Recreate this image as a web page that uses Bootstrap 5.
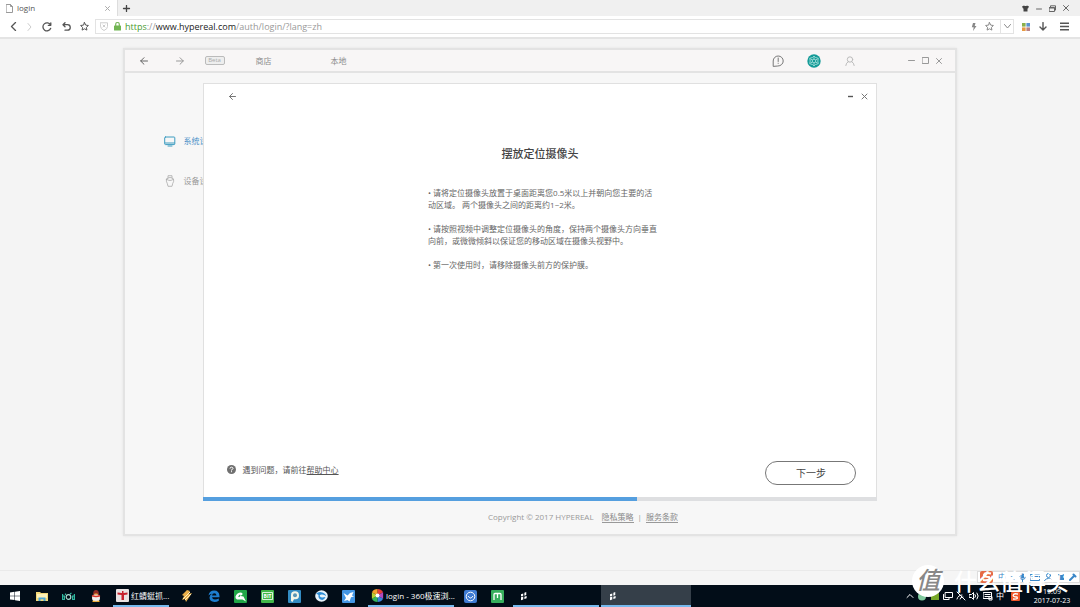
<!DOCTYPE html>
<html lang="zh-CN">
<head>
<meta charset="utf-8">
<meta name="viewport" content="width=device-width, initial-scale=1">
<title>login</title>
<link href="https://cdn.jsdelivr.net/npm/bootstrap@5.3.0/dist/css/bootstrap.min.css" rel="stylesheet">
<style>
body{font-family:"Open Sans","Noto Sans CJK SC",sans-serif;font-size:8px;line-height:12px;color:#666;background:#f4f4f4}
svg{display:block;flex:none}
.ln{fill:none;stroke:currentColor;stroke-linecap:round;stroke-linejoin:round}
.ib{background:none;border:0;padding:0;color:inherit;display:flex;align-items:center;justify-content:center;flex:none}
.tabstrip{height:16px;background:#f0f0f0}
.tab{width:118px;background:#fff;border-right:1px solid #ddd;padding:0 7px 0 6px;color:#555}
.winbtns{gap:7px;padding-right:11px}
.addr{height:23px;background:#fff;border-bottom:2px solid #e4e4e4;color:#555;padding:0 11px 0 7px}
.addr .nb{width:18px}
.urlbox{height:15px;border:1px solid #e3e3e3;margin-left:2px;padding-left:4px}
.urltext{font-size:9px;color:#999;margin-left:4px}
.urltext b{font-weight:500;color:#222}
.urltext i{font-style:normal;color:#4a9c2f}
.drop{width:13px;border-left:1px solid #e3e3e3;color:#888}
.stage{padding:9px 0 0}
.appwin{width:77.3%;height:488px;background:#f7f7f7;border:2px solid #e3e3e3;box-shadow:0 0 2px #e4e4e4}
.apphead{height:23px;background:#f8f6f6;border-bottom:2px solid #e3e3e3;padding:0 13px 0 13px;color:#999}
.apphead a{color:#8c8c8c;text-decoration:none}
.beta{width:20px;height:9px;border:1px solid #bbb;border-radius:2px;background:#eee;color:#aaa;font-size:6px;line-height:7px;text-align:center;margin-left:19px}
.side{width:78px;padding:59px 0 0 39px;overflow:hidden;flex:none;white-space:nowrap}
.side a{display:flex;align-items:center;height:18px;gap:8px;margin-bottom:22px;color:#999;text-decoration:none}
.side a.on{color:#4a90c8}
.dialog-box{margin:10px 78px 0 0;height:418px;background:#fff;border:1px solid #e0e0e0;border-bottom:0}
.dhead{height:24px;padding:0 8px 0 22px;color:#777}
.dtitle{font-size:11px;line-height:16px;font-weight:500;color:#444;text-align:center;margin:38px 0 25px;}
.dtext{width:224px;margin:0 auto;white-space:nowrap}
.dtext p{margin-bottom:12px;line-height:12px}
.dfoot{padding:0 20px 12px 23px}
.help{color:#555;gap:7px;margin-bottom:7px}
.help a{color:#555}
.nextbtn{width:91px;height:24px;border:1px solid #777;border-radius:12px;background:#fff;color:#444;font-size:10px;line-height:20px;padding:0}
.steps{height:4px;border-radius:0;background:#dedfe1;margin:0 -1px}
.steps .progress-bar{background:#559fdf}
.foot{color:#999;padding:10px 0 0 86px}
.foot a{color:#888;text-decoration:none;border-bottom:1px solid #999;line-height:11px}
.statusline{height:15px;border-top:1px solid #eaeaea;background:#f5f5f5}
.taskbar{height:22px;background:#020d18;color:#fff;padding-left:1px}
.taskbar .slot{width:27px}
.task{border-bottom:2px solid #76b9ed;padding:1px 3px 0;justify-content:start;gap:2px;white-space:nowrap}
.task.cur{background:#353f49}
.w-s{width:56px}.w-l{width:86px}.w-xl{width:90px}
.clock{width:56px;font-size:7px;line-height:9px;text-align:center;align-self:center}
.tray{gap:3px;font-size:8px}
.stamp{position:absolute;right:11px;bottom:10px;color:#fff;display:flex;align-items:center;gap:10px;font-size:23px;line-height:32px;font-weight:500;pointer-events:none}
.stamp .disc{width:32px;height:32px;border-radius:50%;background:#fff;color:#888;font-size:24px;font-style:italic;line-height:30px;text-align:center}
.ime{position:absolute;right:0;bottom:24px;height:12px;background:#fff;border:1px solid #ddd;color:#3a87c8;display:flex;gap:4px;align-items:center;padding:0 2px}
</style>
</head>
<body>
<div class="d-flex flex-column vh-100 overflow-hidden position-relative">

<div class="tabstrip d-flex align-items-stretch">
  <div class="tab d-flex align-items-center">
    <svg width="7" height="9" viewBox="0 0 7 9" class="ln" style="color:#999"><path d="M.5.5h4l2 2v6h-6zM4.500.5v2h2"/></svg>
    <span class="ms-1 me-auto">login</span>
    <button class="ib" aria-label="关闭标签"><svg width="5" height="5" viewBox="0 0 5 5" class="ln"><path stroke="#aaa" d="M.5.5l4 4m0-4l-4 4"/></svg></button>
  </div>
  <button class="ib px-1" aria-label="新标签"><svg width="9" height="7" viewBox="0 0 9 7" class="ln"><path stroke="#444" stroke-width="1.300" d="M4.500.5v6m-3-3h6"/></svg></button>
  <div class="winbtns ms-auto d-flex align-items-center">
    <svg width="7" height="7" viewBox="0 0 7 7"><path fill="#444" d="M2 .4q1.500 1 3 0L7 1.500 6 3.400H5.500V6.500h-4V3.400H1L0 1.500z"/></svg>
    <button class="ib" aria-label="最小化"><svg width="6" height="7" class="ln"><path d="M.5 4h5"/></svg></button>
    <button class="ib" aria-label="还原"><svg width="7" height="7" class="ln"><path d="M1.500 2V.8h5V5M.5 2.500h5v4h-5zM.5 3h5"/></svg></button>
    <button class="ib" aria-label="关闭"><svg width="6" height="6" class="ln"><path d="M.5.5l5 5m0-5l-5 5"/></svg></button>
  </div>
</div>

<div class="addr d-flex align-items-center">
  <button class="ib" style="width:13px" aria-label="后退"><svg width="7" height="9" viewBox="0 0 7 9" class="ln"><path stroke-width="1.300" d="M5.500.5l-4 4 4 4"/></svg></button>
  <button class="ib nb" aria-label="前进"><svg width="5" height="8" viewBox="0 0 5 8" class="ln"><path stroke="#ccc" d="M1 .5L4 4 1 7.500"/></svg></button>
  <button class="ib nb" aria-label="刷新"><svg width="10" height="10" viewBox="0 0 10 10" class="ln"><path stroke-width="1.300" d="M8.700 6.300A4 4 0 1 1 8.500 3M8.800.8v2.500H6.300"/></svg></button>
  <button class="ib nb" style="margin-left:1px" aria-label="恢复"><svg width="9" height="9" viewBox="0 0 9 9" class="ln"><path stroke-width="1.300" d="M3 .7L1 2.700l2 2M1 2.700h4.500a2.700 2.700 0 0 1 0 5.500H3"/></svg></button>
  <button class="ib nb" aria-label="收藏"><svg width="9" height="9" viewBox="0 0 9 9" class="ln"><path d="M4.500.6l1.200 2.500 2.700.4-2 1.900.5 2.700-2.400-1.300-2.400 1.300.5-2.700-2-1.900 2.700-.4z"/></svg></button>
  <div class="urlbox d-flex align-items-center flex-grow-1">
    <svg width="8" height="9" viewBox="0 0 8 9" class="ln"><path stroke="#ccc" d="M.5.8h7v3.700q0 2.600-3.500 4-3.500-1.400-3.500-4zM3 3l2 2m0-2l-2 2"/></svg>
    <svg style="margin-left:6px" width="7" height="9" viewBox="0 0 7 9"><path fill="none" stroke="#7cb85f" stroke-width="1.200" d="M1.700 4V2.300a1.800 1.800 0 0 1 3.600 0V4"/><rect y="3.500" width="7" height="5" rx=".6" fill="#71b552"/></svg>
    <span class="urltext"><i>https</i>://<b>www.hypereal.com</b>/auth/login/?lang=zh</span>
    <div class="ms-auto d-flex align-items-center gap-2 h-100">
      <svg width="6" height="8" viewBox="0 0 6 8"><path fill="#888" d="M2 0h2.500L3.700 3H5.500L2 8l.7-3.800H.8z"/></svg>
      <svg width="9" height="9" viewBox="0 0 9 9" class="ln"><path stroke="#888" d="M4.500.6l1.200 2.500 2.700.4-2 1.900.5 2.700-2.400-1.300-2.400 1.300.5-2.700-2-1.900 2.700-.4z"/></svg>
      <button class="ib drop h-100" style="margin-left:-2px" aria-label="展开"><svg width="7" height="5" class="ln"><path d="M.5.5l3 3.500 3-3.500"/></svg></button>
    </div>
  </div>
  <svg class="ms-2" width="8" height="8" viewBox="0 0 8 8"><path fill="#8ab04b" d="M0 0h3.600v3.600H0z"/><path fill="#5b93cf" d="M4.400 0H8v3.600H4.400z"/><path fill="#e79a43" d="M0 4.400h3.600V8H0z"/><path fill="#b98284" d="M4.400 4.400H8V8H4.400z"/></svg>
  <button class="ib px-2" aria-label="下载"><svg width="10" height="9" viewBox="0 0 10 9" class="ln"><path stroke-width="1.400" d="M5 .6v7M2 5l3 3 3-3"/></svg></button>
  <button class="ib ps-1" aria-label="菜单"><svg width="9" height="9" viewBox="0 0 9 9"><path stroke="#555" stroke-width="1.400" d="M0 1.200h9M0 4.500h9M0 7.800h9"/></svg></button>
</div>

<main class="stage flex-grow-1">
  <div class="appwin mx-auto d-flex flex-column">
    <header class="apphead d-flex align-items-center flex-shrink-0">
      <button class="ib" style="width:12px" aria-label="返回"><svg width="8" height="8" viewBox="0 0 8 8" class="ln"><path stroke="#666" d="M7.500 4H.7M4 .7L.7 4 4 7.300"/></svg></button>
      <button class="ib" style="width:12px;margin-left:24px" aria-label="前进"><svg width="8" height="8" viewBox="0 0 8 8" class="ln"><path d="M.5 4h6.800M4 .7L7.300 4 4 7.300"/></svg></button>
      <span class="beta">Beta</span>
      <a href="#" style="margin-left:31px">商店</a>
      <a href="#" style="margin-left:59px">本地</a>
      <div class="ms-auto d-flex align-items-center">
        <button class="ib" aria-label="反馈"><svg width="12" height="12" viewBox="0 0 12 12" class="ln"><path stroke="#777" d="M1.200 11V6a5 5 0 1 1 5 5zM6.200 3v3.500m0 1.700v.2"/></svg></button>
        <button class="ib" style="margin:0 24px 0 23px" aria-label="设置"><svg width="14" height="14" viewBox="0 0 14 14"><circle cx="7" cy="7" r="6.700" fill="#159b98"/><g fill="none" stroke="#b1e4df" stroke-width=".8"><path d="M7 2l1.500 1.500 2.800.8-.5 2.700.5 2.700-2.800.8L7 12l-1.500-1.500-2.800-.8.5-2.700-.5-2.700 2.800-.8z"/><circle cx="7" cy="7" r="1.800"/><path d="M7 3v2.200M7 8.800V11M3.500 5l2 1m3 2l2 1m-7 0l2-1m3-2l2-1"/></g></svg></button>
        <button class="ib" aria-label="用户"><svg width="10" height="10" viewBox="0 0 10 10" class="ln"><circle cx="5" cy="3.500" r="2.700" stroke="#bbb"/><path stroke="#bbb" d="M.8 9.500Q1 6.800 3.200 5.700m3.600 0Q9 6.800 9.200 9.500"/></svg></button>
        <button class="ib" style="margin-left:53px" aria-label="最小化"><svg width="7" height="7" class="ln"><path d="M.5 3.500h6"/></svg></button>
        <button class="ib" style="margin:0 7px" aria-label="最大化"><svg width="7" height="7" class="ln"><path d="M.5.5h6v6h-6z"/></svg></button>
        <button class="ib" aria-label="关闭"><svg width="6" height="6" class="ln"><path d="M.5.5l5 5m0-5l-5 5"/></svg></button>
      </div>
    </header>
    <div class="d-flex">
      <nav class="side">
        <a class="on" href="#"><svg width="12" height="11" viewBox="0 0 12 11" class="ln"><path stroke="#3c9cc0" d="M1.500 1h8.500q.8 0 .8.8v6q0 .8-.8.8H1.500q-.8 0-.8-.8v-6Q.7 1 1.500 1zM1 7h9.500M4 10h4"/></svg>系统设置</a>
        <a href="#"><svg width="12" height="12" viewBox="0 0 12 12" class="ln"><path stroke="#aaa" stroke-width=".8" d="M4 3V.7h4V3M2.500 4.200Q4 2.500 6 2.500t3.500 1.700q.8 2-.8 4.300l-.7 2.800H4l-.7-2.800Q1.700 6.200 2.500 4.200zM2.500 4.200Q6 7 9.500 4.200"/></svg>设备设置</a>
      </nav>
      <section class="dialog-box flex-grow-1 d-flex flex-column">
        <div class="dhead d-flex align-items-center">
          <button class="ib" style="width:13px" aria-label="上一步"><svg width="7" height="7" viewBox="0 0 7 7" class="ln"><path d="M6.500 3.500h-6M3.500.5l-3 3 3 3"/></svg></button>
          <button class="ib ms-auto me-2" aria-label="最小化"><svg width="5" height="6"><path stroke="#555" stroke-width="1.400" d="M0 3.500h5"/></svg></button>
          <button class="ib" aria-label="关闭"><svg width="7" height="7" viewBox="0 0 7 7" class="ln"><path d="M1 1l5 5m0-5L1 6"/></svg></button>
        </div>
        <h1 class="dtitle">摆放定位摄像头</h1>
        <div class="dtext">
          <p>• 请将定位摄像头放置于桌面距离您0.5米以上并朝向您主要的活<br>动区域。 两个摄像头之间的距离约1~2米。</p>
          <p>• 请按照视频中调整定位摄像头的角度，保持两个摄像头方向垂直<br>向前，或微微倾斜以保证您的移动区域在摄像头视野中。</p>
          <p>• 第一次使用时，请移除摄像头前方的保护膜。</p>
        </div>
        <div class="dfoot d-flex align-items-center justify-content-between mt-auto">
          <div class="help d-flex align-items-center"><svg width="9" height="9" viewBox="0 0 9 9"><circle cx="4.500" cy="4.500" r="4.500" fill="#707070"/><path fill="none" stroke="#fff" d="M3 3.600Q3 2.200 4.500 2.200T6 3.500Q6 4.300 4.500 4.800v.7m0 .7v1"/></svg><span>遇到问题，请前往<a href="#">帮助中心</a></span></div>
          <button class="nextbtn">下一步</button>
        </div>
        <div class="progress steps" role="progressbar" aria-label="设置进度" aria-valuenow="64" aria-valuemin="0" aria-valuemax="100"><div class="progress-bar" style="width:64.400%"></div></div>
      </section>
    </div>
    <footer class="foot d-flex justify-content-center">
      <span class="me-2">Copyright © 2017 HYPEREAL</span><a href="#">隐私策略</a><span class="mx-1">|</span><a href="#">服务条款</a>
    </footer>
  </div>
</main>

<div class="statusline flex-shrink-0"></div>
<div class="taskbar d-flex align-items-stretch flex-shrink-0">
  <button class="ib slot" aria-label="开始"><svg width="10" height="10" viewBox="0 0 10 10"><path fill="#fff" d="M0 1.500L4.500.8v3.900H0zM5 .7l5-.7v4.700H5zM0 5.200h4.500v3.900L0 8.500zM5 5.200h5V10l-5-.8z"/></svg></button>
  <button class="ib slot" aria-label="文件"><svg width="12" height="11" viewBox="0 0 12 11"><path fill="#f3d778" d="M0 1h4l1 1h7v8H0z"/><path fill="#fdf1b8" d="M1 3h10v4H1z"/><path fill="#4fa8d8" d="M2.500 6.500h7V10h-2V8.300h-3V10h-2z"/></svg></button>
  <button class="ib slot" aria-label="工具"><svg width="13" height="9" viewBox="0 0 13 9" fill="none" stroke="#2eb89f" stroke-width="1.200"><path d="M.6 2v5.500h1.800V4H.6M12.400 2v5.500h-1.800V4h1.800M3.500 3V1.500M9.500 1L8 2"/><circle cx="6.500" cy="5" r="2.300" stroke="#a8dccf"/></svg></button>
  <button class="ib slot" aria-label="QQ"><svg width="10" height="12" viewBox="0 0 10 12"><ellipse cx="5" cy="3.500" rx="2.800" ry="3.500" fill="#8e2a25"/><ellipse cx="5" cy="8" rx="4" ry="3.700" fill="#f2eeee"/><path stroke="#d93428" stroke-width="1.500" d="M1 5.500q4 2 8 0" fill="none"/><path fill="#f5ad26" d="M1.500 10.800h3V12h-3zM5.500 10.800h3V12h-3zM3.500 3.600h3v1h-3z"/></svg></button>
  <button class="ib task w-s" style="margin:0 4px"><svg width="13" height="13" viewBox="0 0 13 13"><rect width="13" height="13" rx="1" fill="#e9e2e2"/><path fill="#c6202c" d="M1.500 3.500L6 4V2h1.500v2l4-.5v2L8 6v5H5.500V6l-4-.5z"/></svg>红蜻蜓抓...</button>
  <button class="ib slot" aria-label="播放器"><svg width="12" height="12" viewBox="0 0 12 12"><path fill="#e8ad48" d="M6 0l3 1-2 3 4-1-6 9-1-3-3 1 2-4-2-1z"/><path stroke="#fff1c1" d="M2 9l7-7M4 10l6-6"/></svg></button>
  <button class="ib slot" aria-label="Edge"><svg width="12" height="12" viewBox="0 0 12 12"><path fill="#1d7ed0" d="M.5 5.500Q1.300.5 6.200.5T11.500 6v1.200H4q.4 2.300 3 2.300 2 0 3.800-1v2.300Q9 12 6.500 12 1.500 11.500 1.500 7.500 1.700 5 4 3.700 2 4 .5 5.500zM4 5.400h4.500Q8.300 3.300 6.300 3.300T4 5.400z"/></svg></button>
  <button class="ib slot" aria-label="绿色工具"><svg width="13" height="13" viewBox="0 0 13 13"><rect width="13" height="13" rx="1" fill="#21a647"/><path fill="#fff" d="M1.500 6.500Q3 2.500 7 2.500q2 .3 1.500 2L6.500 6l3 .5 2.500 5-3.500-2H3Q1 8.500 1.500 6.500z"/><path fill="#21a647" d="M4 6.500l2-2 .5 1L5.500 7z"/></svg></button>
  <button class="ib slot" aria-label="BIT"><svg width="13" height="13" viewBox="0 0 13 13"><rect width="13" height="13" rx="1" fill="#43b649"/><path fill="none" stroke="#fff" stroke-width=".8" d="M1.500 2.500h10v7h-10z"/><text x="6.500" y="8" font-size="5" font-weight="700" fill="#fff" text-anchor="middle">BIT</text></svg></button>
  <button class="ib slot" aria-label="照片"><svg width="13" height="13" viewBox="0 0 13 13"><rect width="13" height="13" rx="1" fill="#338cc3"/><path fill="#f4f6e9" d="M3 11V5q0-3.700 4-3.700T11 5.500 7 9.300H6L4.500 12z"/><circle cx="7" cy="5.300" r="2" fill="#5b96b5"/></svg></button>
  <button class="ib slot" aria-label="浏览器"><svg width="13" height="12" viewBox="0 0 13 12"><ellipse cx="6.500" cy="6" rx="6.300" ry="5.800" fill="#e7f2fa"/><path fill="#2b8cd5" d="M1 3.500Q4 1 7.500 2.500T11 6Q9 4 6.500 4.500T5 6.500q1 1.500 5.500.5Q9 11 5.500 9.500 3 8 3.500 5 2.500 4 1 3.500z"/></svg></button>
  <button class="ib slot" aria-label="迅雷"><svg width="13" height="13" viewBox="0 0 13 13"><rect width="13" height="13" rx="1" fill="#4496e4"/><path fill="#fff" d="M1.500 3l4 2.500L8 3l3.500-1-1.500 3.500 2 1-3 .8-1.500 4.200-2-1.500L2 11l2-3z"/></svg></button>
  <button class="ib task w-l" style="margin:0 3px 0 6px"><svg width="13" height="13" viewBox="0 0 13 13"><path fill="#e73e3b" d="M6.500 6.500V0a6.500 6.500 0 0 1 5.600 3.300z"/><path fill="#b449be" d="M6.500 6.500l5.600-3.200v6.500z"/><path fill="#3a83dd" d="M6.500 6.500l5.600 3.300A6.500 6.500 0 0 1 6.500 13z"/><path fill="#34b65a" d="M6.500 6.500V13A6.500 6.500 0 0 1 .9 9.800z"/><path fill="#b5cf34" d="M6.500 6.500L.9 9.800V3.300z"/><path fill="#f5a12c" d="M6.500 6.500L.9 3.300A6.500 6.500 0 0 1 6.500 0z"/><circle cx="6.500" cy="6.500" r="2" fill="#fff"/></svg>login - 360极速浏...</button>
  <button class="ib slot" aria-label="蓝色应用"><svg width="13" height="13" viewBox="0 0 13 13" fill="none" stroke="#fff"><rect width="13" height="13" rx="2" fill="#3f7bd2" stroke="none"/><circle cx="6.500" cy="6.500" r="4.300"/><path d="M4 6q2.500 4 5 0"/></svg></button>
  <button class="ib slot" aria-label="M 应用"><svg width="13" height="13" viewBox="0 0 13 13" fill="none" stroke="#fff" stroke-width="1.300"><rect width="13" height="13" rx="1" fill="#37ae5c" stroke="none"/><path d="M3 10V4.500Q3 3.500 4 3.500h5q1 0 1 1V10M6.500 4v4"/></svg></button>
  <button class="ib task w-l ps-2" style="margin:0 2px" aria-label="Hypereal"><svg width="6" height="10" viewBox="0 0 8 11" fill="#fff"><path d="M0 3l3-1v3L0 6zM0 7l3-1v4l-3 1zM4.500 1L7 0v4L4.500 5zM4.500 6.500L7.500 5.500v3l-3 1z"/></svg></button>
  <button class="ib task cur w-xl" style="padding-left:9px" aria-label="Hypereal 当前窗口"><svg width="6" height="10" viewBox="0 0 8 11" fill="#fff"><path d="M0 3l3-1v3L0 6zM0 7l3-1v4l-3 1zM4.500 1L7 0v4L4.500 5zM4.500 6.500L7.500 5.500v3l-3 1z"/></svg></button>
  <div class="tray ms-auto d-flex align-items-center">
    <svg width="8" height="6" class="ln"><path d="M1 4.500l3-3 3 3"/></svg>
    <svg width="10" height="9"><circle cx="5" cy="4.500" r="4" fill="#7fc99e"/></svg>
    <svg width="10" height="9"><path fill="#76a728" d="M1 2l8-1v7H1z"/></svg>
    <svg width="10" height="10" class="ln"><path d="M2.500 1.500h7v5h-7zM.5 3.500v5h5M6 6.500v2"/></svg>
    <svg width="10" height="10" class="ln"><path d="M1 1l4 4 4 4M1 8q1-4 5-4M4 8q0-2 3-2"/></svg>
    <svg width="11" height="10" class="ln"><path d="M.5 3.500h2l2-2v7l-2-2h-2zM6 3.500q1.500 1.500 0 3M8 2q2.500 3 0 6"/></svg>
    <svg width="10" height="10" class="ln"><path d="M.5 1.500h8v6h-8zM2 3.500h5M2 5.500h5M6 6v3h3V6z"/></svg>
    <span>中</span>
    <svg class="ms-1 me-1" width="9" height="9" viewBox="0 0 9 9"><rect width="9" height="9" rx="1" fill="#ee5428"/><path fill="none" stroke="#fff" stroke-width="1.300" d="M7 2.200Q3 1 2.300 3T6 5Q7.500 7.500 2 7"/></svg>
  </div>
  <div class="clock">19:09<br>2017-07-23</div>
</div>

<div class="ime" aria-label="输入法工具栏"><svg width="14" height="14" viewBox="0 0 14 14"><rect y="1" width="13" height="12" rx="2" fill="#e56a44"/><path fill="none" stroke="#fff" stroke-width="2" d="M11 3.500Q5 2 4 4.500T9 7Q11 11 3 10"/></svg><span>中</span><span>•,</span>
  <svg width="7" height="9" viewBox="0 0 7 9" class="ln"><path fill="currentColor" d="M2.500 1h2v4h-2z"/><path d="M.7 4q0 2.500 2.800 2.500T6.300 4M3.500 6.500v2"/></svg>
  <svg width="10" height="7" class="ln"><path d="M.5.5h9v6h-9zM2 2.500h6M3 4.500h4"/></svg>
  <svg width="9" height="8" viewBox="0 0 9 8" class="ln"><circle cx="4.500" cy="2.500" r="2"/><path d="M.5 7.500Q4.500 3 8.500 7.500"/></svg>
  <svg width="8" height="8"><path fill="#3a87c8" d="M1 1l2 1h2l2-1v6H1z"/></svg>
  <svg width="8" height="8" class="ln"><path stroke-width="2" d="M1 7l4-4M4.500 1.500l2 2"/></svg>
</div>
<div class="stamp"><span class="disc">值</span><span>什么值得买</span></div>
</div>
<script src="https://cdn.jsdelivr.net/npm/bootstrap@5.3.0/dist/js/bootstrap.bundle.min.js"></script>
</body>
</html>
